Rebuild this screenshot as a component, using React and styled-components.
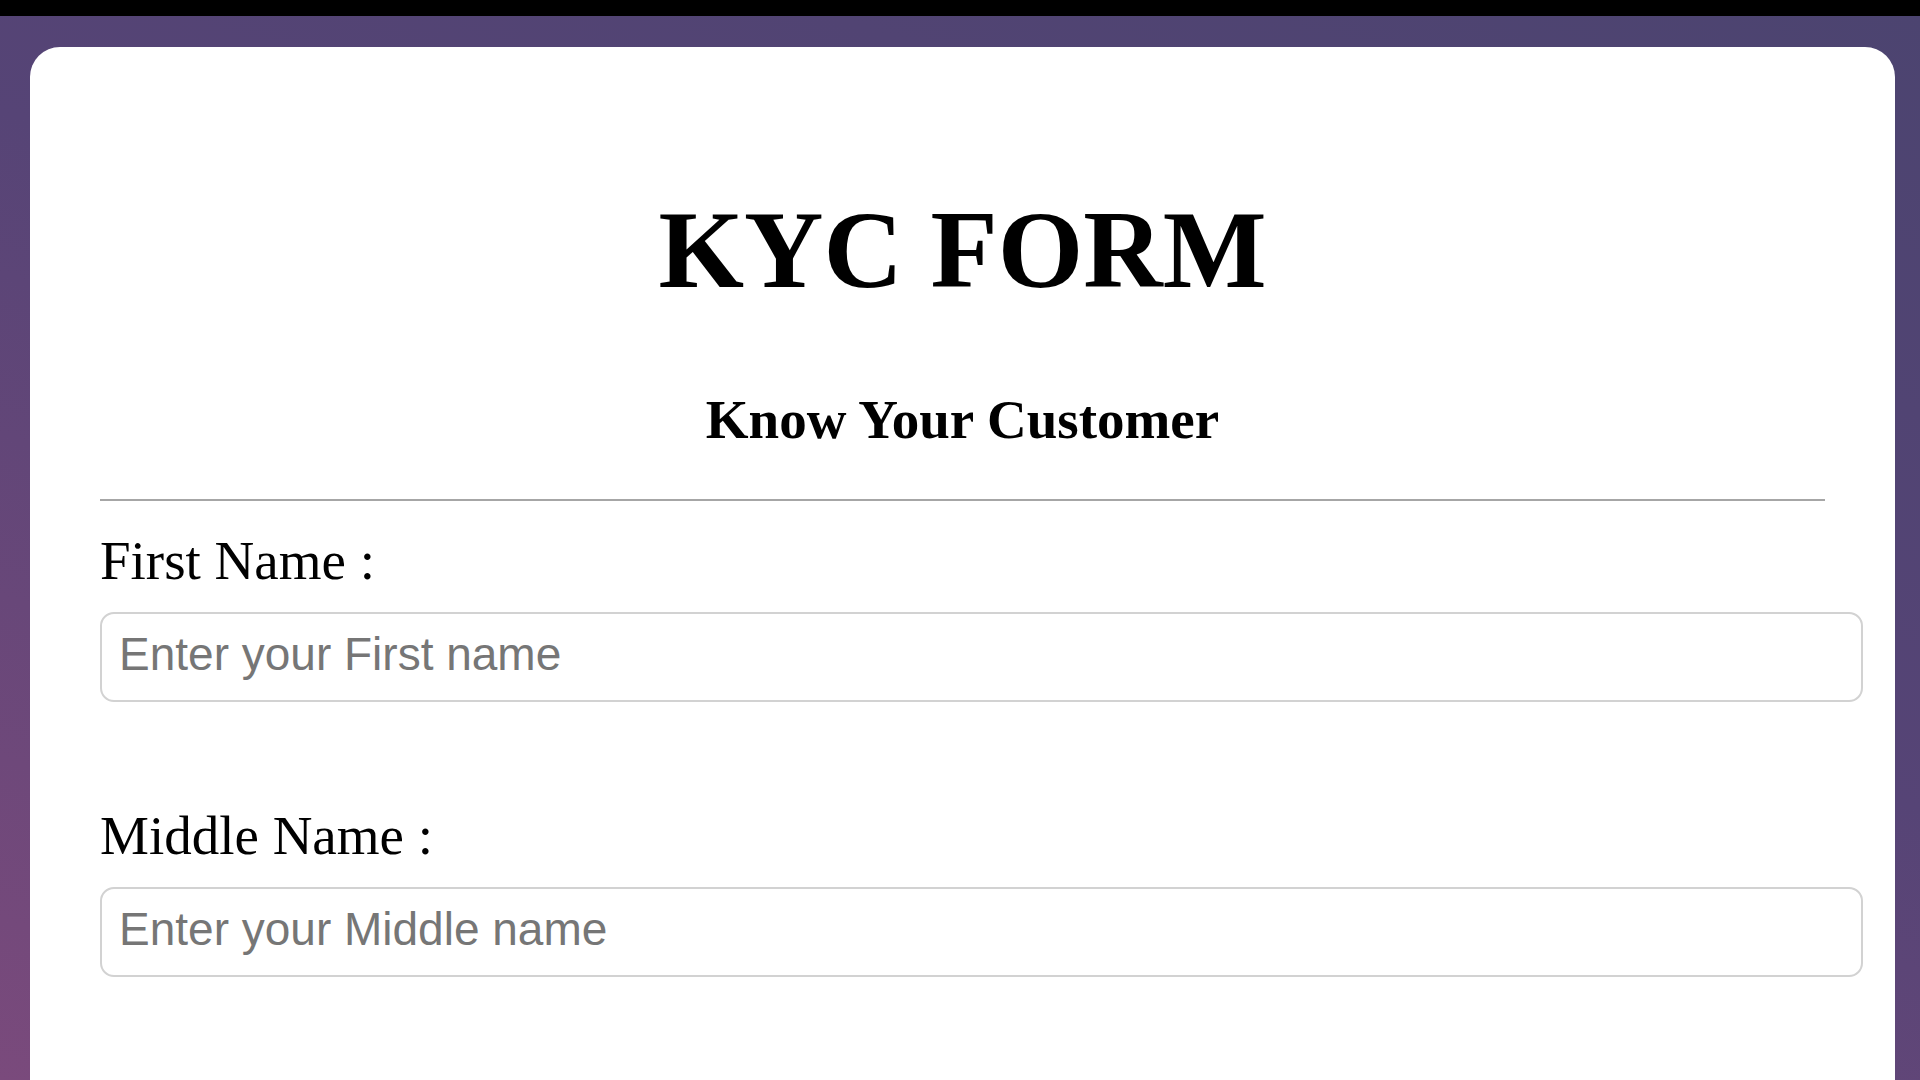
import React from 'react'
import styled, { createGlobalStyle } from 'styled-components'

const GlobalStyle = createGlobalStyle`
  * {
    box-sizing: border-box;
  }
  body {
    margin: 0;
    font-family: "Liberation Serif", "Times New Roman", serif;
    background: #000;
  }
`

const TopBar = styled.div`
  height: 16px;
  background: #000;
`

const Page = styled.div`
  height: calc(100vh - 16px);
  overflow: hidden;
  padding: 31px 25px 0 30px;
  background: linear-gradient(200deg, #4c4470 0%, #564476 45%, #7a4a7c 100%);
`

const Card = styled.div`
  background: #fff;
  border-radius: 30px 30px 0 0;
  padding: 143px 32px 200px 70px;
  min-height: 1200px;
`

const HeaderGroup = styled.div`
  text-align: center;
  margin-right: 38px;
`

const Title = styled.h1`
  margin: 0;
  font-size: 110px;
  line-height: 120px;
  font-weight: 700;
  color: #000;
`

const SubTitle = styled.h3`
  margin: 78px 0 0;
  font-size: 55px;
  line-height: 64px;
  font-weight: 700;
  color: #000;
`

const Divider = styled.hr`
  margin: 47px 38px 0 0;
  border: none;
  border-top: 2px solid #a6a6a6;
  height: 0;
`

const Form = styled.form`
  display: flex;
  flex-direction: column;
`

const Field = styled.div`
  display: flex;
  flex-direction: column;
  margin-top: ${props => props.first ? '29px' : '103px'};
`

const Label = styled.label`
  font-size: 55px;
  line-height: 62px;
  color: #000;
`

const Input = styled.input`
  margin-top: 20px;
  height: 90px;
  width: 100%;
  padding: 0 17px 6px;
  border: 2px solid #d2d2d2;
  border-radius: 14px;
  font-family: "Liberation Sans", Arial, sans-serif;
  font-size: 46px;
  color: #222;
  background: #fff;
  outline: none;

  &::placeholder {
    color: #767676;
  }
`

const fields = [
  { id: 'first', label: 'First Name :', placeholder: 'Enter your First name' },
  { id: 'middle', label: 'Middle Name :', placeholder: 'Enter your Middle name' },
]

const App = () => {
  return <>
    <GlobalStyle />
    <TopBar />
    <Page>
      <Card>
        <HeaderGroup>
          <Title>KYC FORM</Title>
          <SubTitle>Know Your Customer</SubTitle>
        </HeaderGroup>
        <Divider />
        <Form onSubmit={e => e.preventDefault()}>
          {fields.map((field, index) => {
            return <Field key={field.id} first={index === 0}>
              <Label htmlFor={field.id}>{field.label}</Label>
              <Input id={field.id} type="text" placeholder={field.placeholder} />
            </Field>
          })}
        </Form>
      </Card>
    </Page>
  </>
}

export default App
